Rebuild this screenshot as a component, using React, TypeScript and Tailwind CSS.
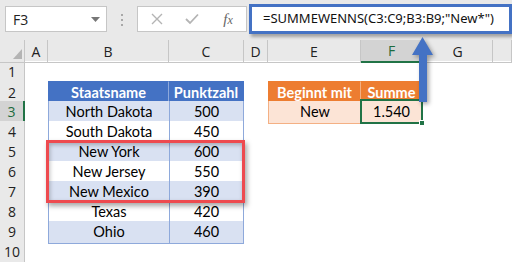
import React from "react";

const COLS = "grid grid-cols-[25px_23px_121px_75px_24px_93px_62px_70px_1fr]";

type Row = {
  n: number;
  b?: string;
  c?: string;
  e?: string;
  f?: string;
  kind?: "head" | "blue" | "white";
};

const rows: Row[] = [
  { n: 1 },
  { n: 2, b: "Staatsname", c: "Punktzahl", e: "Beginnt mit", f: "Summe", kind: "head" },
  { n: 3, b: "North Dakota", c: "500", e: "New", f: "1.540", kind: "blue" },
  { n: 4, b: "South Dakota", c: "450", kind: "white" },
  { n: 5, b: "New York", c: "600", kind: "blue" },
  { n: 6, b: "New Jersey", c: "550", kind: "white" },
  { n: 7, b: "New Mexico", c: "390", kind: "blue" },
  { n: 8, b: "Texas", c: "420", kind: "white" },
  { n: 9, b: "Ohio", c: "460", kind: "blue" },
  { n: 10 },
];

const cellFont = "font-['Lato',sans-serif] text-[14.5px] text-black";
const headFont = "font-['Lato',sans-serif] text-[14.5px] font-bold text-white";

function TableCells({ r }: { r: Row }) {
  if (!r.kind) {
    return (
      <>
        <div />
        <div />
        <div />
        <div />
        <div />
        <div />
        <div />
      </>
    );
  }
  const head = r.kind === "head";
  const bg = head ? "bg-[#4472C4]" : r.kind === "blue" ? "bg-[#D9E1F2]" : "bg-white";
  const font = head ? headFont : cellFont;
  return (
    <>
      <div />
      <div
        className={`${bg} ${font} flex items-center justify-center border-l border-b ${
          head ? "border-t border-[#4472C4] border-r border-r-[#8EA9DB]" : "border-[#8EA9DB]"
        }`}
      >
        {r.b}
      </div>
      <div
        className={`${bg} ${font} flex items-center justify-center border-r border-b ${
          head ? "border-t border-[#4472C4]" : "border-l border-[#8EA9DB]"
        }`}
      >
        {r.c}
      </div>
      <div />
      {r.e !== undefined ? (
        <div
          className={`${
            head
              ? `bg-[#ED7D31] ${headFont} border-t border-[#ED7D31] border-r border-r-[#F4B084]`
              : `bg-[#FCE4D6] border-[#F4B084] ${cellFont}`
          } flex items-center justify-center border-l border-b`}
        >
          {r.e}
        </div>
      ) : (
        <div />
      )}
      {r.f !== undefined ? (
        <div
          className={`relative ${
            head
              ? `bg-[#ED7D31] border-t border-[#ED7D31] ${headFont}`
              : `bg-[#FCE4D6] border-[#F4B084] ${cellFont}`
          } flex items-center justify-center border-r border-b`}
        >
          {r.f}
          {!head && (
            <div className="absolute -left-[1px] -top-[2px] -right-[1px] -bottom-[1px] border-2 border-[#217346]">
              <div className="absolute -right-[4px] -bottom-[4px] h-[6px] w-[6px] border border-white bg-[#217346]" />
            </div>
          )}
        </div>
      ) : (
        <div />
      )}
      <div />
    </>
  );
}

export default function App() {
  const colHeads = ["A", "B", "C", "D", "E", "F", "G", ""];
  return (
    <div className="relative h-[262px] w-[512px] overflow-hidden bg-white">
      {/* Top bar */}
      <div className="flex h-[40px] items-start bg-[#E9E9E9]">
        <div className="ml-[5px] mt-[6px] flex h-[26px] w-[102px] items-center justify-between border border-[#C6C6C6] bg-white pl-[7px] pr-[6px]">
          <span className="font-['Open_Sans',sans-serif] text-[14px] text-[#222]">F3</span>
          <svg width="9" height="5" viewBox="0 0 9 5">
            <path d="M0 0 L9 0 L4.5 5 Z" fill="#777" />
          </svg>
        </div>
        <div className="flex h-[40px] w-[30px] flex-col items-center justify-center gap-[3px]">
          <div className="h-[2px] w-[2px] bg-[#A8A8A8]" />
          <div className="h-[2px] w-[2px] bg-[#A8A8A8]" />
          <div className="h-[2px] w-[2px] bg-[#A8A8A8]" />
        </div>
        <div className="mt-[6px] flex h-[26px] w-[110px] items-center border border-[#C6C6C6] bg-white">
          <div className="flex w-[36px] justify-center pl-[2px]">
            <svg width="12" height="12" viewBox="0 0 12 12">
              <path d="M1 1 L11 11 M11 1 L1 11" stroke="#B4B4B4" strokeWidth="1.4" />
            </svg>
          </div>
          <div className="flex w-[36px] justify-center">
            <svg width="14" height="12" viewBox="0 0 14 12">
              <path d="M1 6 L5 10 L13 1.5" stroke="#B4B4B4" strokeWidth="1.8" fill="none" />
            </svg>
          </div>
          <div className="flex w-[36px] justify-center">
            <span className="font-['Liberation_Serif',serif] text-[15px] italic text-[#666]">
              f<span className="text-[12px]">x</span>
            </span>
          </div>
        </div>
        <div className="ml-[2px] mt-[4px] flex h-[30px] flex-1 items-center border-[3px] border-[#4472C4] bg-white pl-[11px] shadow-[2px_3px_3px_rgba(0,0,0,0.3)]">
          <span className="whitespace-nowrap font-['Noto_Sans',sans-serif] text-[13px] text-[#111]">
            =SUMMEWENNS(C3:C9;B3:B9;"New*")
          </span>
        </div>
      </div>

      {/* Sheet */}
      <div className="relative">
        <div className={`${COLS} h-[21px] bg-[#E9E9E9]`}>
          <div className="relative border-r border-b border-[#C6C6C6]">
            <svg className="absolute right-[2px] bottom-[3px]" width="9" height="10" viewBox="0 0 9 10">
              <path d="M9 0 L9 10 L0 10 Z" fill="#B4B4B4" />
            </svg>
          </div>
          {colHeads.map((h, i) => {
            const sel = h === "F";
            return (
              <div
                key={i}
                className={`flex items-center justify-center font-['Open_Sans',sans-serif] text-[14px] ${
                  sel
                    ? "border-r border-[#C6C6C6] border-b-2 border-b-[#217346] bg-[#D3D3D3] text-[#1E6B3E]"
                    : "border-r border-b border-[#C6C6C6] text-[#222]"
                }`}
              >
                {h}
              </div>
            );
          })}
        </div>
        {rows.map((r) => (
          <div key={r.n} className={`${COLS} h-[20px]`}>
            <div
              className={`flex items-center justify-center font-['Open_Sans',sans-serif] text-[14px] border-b border-[#D0D0D0] ${
                r.n === 3
                  ? "bg-[#D3D3D3] text-[#1E6B3E] border-r-2 border-r-[#217346]"
                  : "bg-[#E9E9E9] text-[#222] border-r border-r-[#C6C6C6]"
              }`}
            >
              {r.n}
            </div>
            <TableCells r={r} />
          </div>
        ))}

        {/* Red highlight box */}
        <div className="pointer-events-none absolute left-[46px] top-[100px] h-[63px] w-[199px] border-[3px] border-[#EE4A4F] shadow-[2px_3px_5px_rgba(0,0,0,0.35),inset_1px_2px_4px_rgba(0,0,0,0.25)]" />
      </div>

      {/* Arrow */}
      <svg
        className="pointer-events-none absolute left-[408px] top-[34px]"
        width="32"
        height="74"
        viewBox="0 0 32 74"
        style={{ filter: "drop-shadow(2px 2px 2px rgba(0,0,0,0.35))" }}
      >
        <path d="M14.5 3 L25 21 L19 21 L19 68 L11 68 L11 21 L4 21 Z" fill="#4472C4" />
      </svg>
    </div>
  );
}
